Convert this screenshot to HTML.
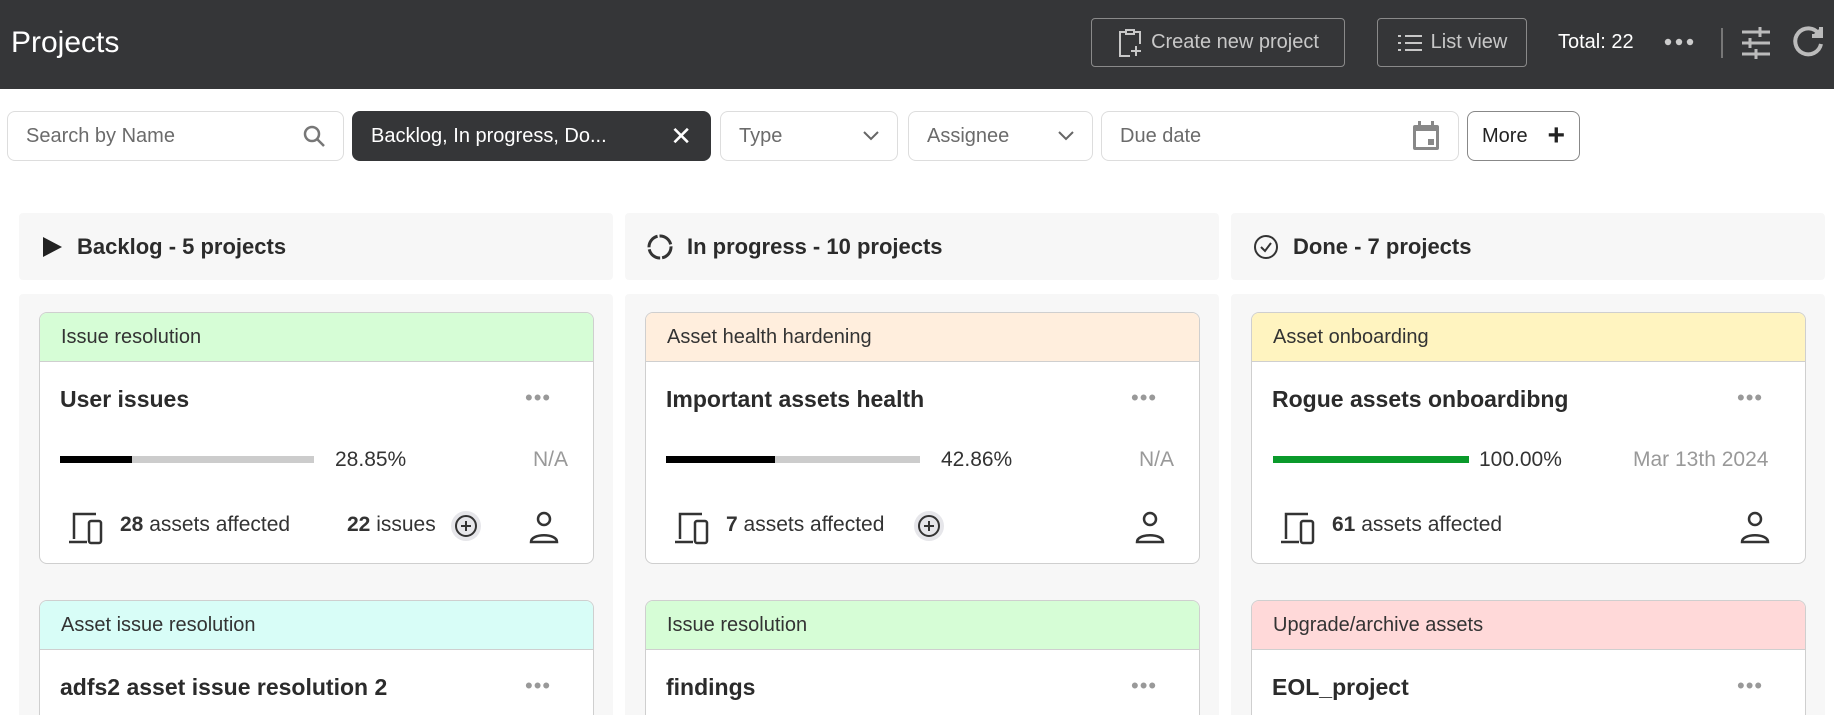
<!DOCTYPE html>
<html><head><meta charset="utf-8"><style>
*{box-sizing:border-box;margin:0;padding:0}
html,body{width:1834px;height:715px;overflow:hidden}
body{background:#fff;font-family:"Liberation Sans",sans-serif;color:#2b2b2b}
#w{position:relative;width:1834px;height:715px;overflow:hidden}
.a{position:absolute}
.hdr{left:0;top:0;width:1834px;height:89px;background:#353638}
.hbtn{border:1px solid #8a8a8a;border-radius:4px;color:#c8c8c8;font-size:20px;display:flex;align-items:center;justify-content:center;gap:8px;height:49px;top:18px}
.fl{top:111px;height:50px;border:1px solid #ddd;border-radius:8px;font-size:20px;color:#6b6b6b;display:flex;align-items:center;padding:0 18px;justify-content:space-between}
.colh{top:213px;height:67px;background:#f7f7f7;border-radius:4px;font-size:22px;font-weight:bold;display:flex;align-items:center;padding-left:22px;gap:14px}
.colb{top:294px;height:430px;background:#f7f7f7;border-radius:4px}
.card{width:555px;border:1px solid #cfcfcf;border-radius:8px;background:#fff;overflow:hidden}
.tag{height:49px;border-bottom:1px solid #cfcfcf;font-size:20px;padding-left:21px;display:flex;align-items:center;color:#333}
.t{font-size:23px;font-weight:bold;color:#2b2b2b}
.dots{color:#999;font-size:22px;letter-spacing:1px}
.txt{font-size:21px;color:#333}
.gray{color:#999}
</style></head><body><div id="w">
<div class="a hdr"></div>
<div class="a" style="left:11px;top:26px;font-size:30px;color:#fff">Projects</div>
<div class="a hbtn" style="left:1091px;width:254px"><svg width="26" height="30" viewBox="0 0 26 30" fill="none" stroke="#c8c8c8" stroke-width="2"><path d="M9 4H3v24h10M17 4h6v12"/><rect x="9" y="2" width="8" height="4"/><path d="M19 18v10M14 23h10"/></svg>Create new project</div>
<div class="a hbtn" style="left:1377px;width:150px"><svg width="26" height="20" viewBox="0 0 26 20" stroke="#c8c8c8" stroke-width="2"><path d="M1 3h3M8 3h17M1 10h3M8 10h17M1 17h3M8 17h17"/></svg>List view</div>
<div class="a" style="left:1558px;top:31px;color:#fff;font-size:20px">Total: 22</div>
<svg class="a" style="left:1663px;top:38px" width="32" height="8" viewBox="0 0 32 8" fill="#ccc"><circle cx="5" cy="4" r="3.2"/><circle cx="16" cy="4" r="3.2"/><circle cx="27" cy="4" r="3.2"/></svg>
<div class="a" style="left:1721px;top:28px;width:2px;height:30px;background:#777"></div>
<svg class="a" style="left:1740px;top:26px" width="32" height="34" viewBox="0 0 32 34" stroke="#bbb" stroke-width="3"><path d="M2 6h28M2 17h28M2 28h28M20 1v10M10 12v10M16 23v10"/></svg>
<svg class="a" style="left:1790px;top:24px" width="36" height="36" viewBox="0 0 36 36" fill="none" stroke="#bbb" stroke-width="4"><path d="M29 10A13 13 0 1 0 31 20"/><path d="M31 3v9h-9" fill="#bbb"/></svg>

<div class="a fl" style="left:7px;width:337px"><span>Search by Name</span><svg width="22" height="22" viewBox="0 0 22 22" fill="none" stroke="#777" stroke-width="2.5"><circle cx="9" cy="9" r="7"/><path d="M14 14l7 7"/></svg></div>
<div class="a fl" style="left:352px;width:359px;background:#353638;border-color:#353638;color:#fff"><span>Backlog, In progress, Do...</span><span style="font-size:26px">✕</span></div>
<div class="a fl" style="left:720px;width:178px"><span>Type</span><svg width="16" height="10" viewBox="0 0 16 10" fill="none" stroke="#666" stroke-width="2"><path d="M1 1l7 7 7-7"/></svg></div>
<div class="a fl" style="left:908px;width:185px"><span>Assignee</span><svg width="16" height="10" viewBox="0 0 16 10" fill="none" stroke="#666" stroke-width="2"><path d="M1 1l7 7 7-7"/></svg></div>
<div class="a fl" style="left:1101px;width:358px"><span>Due date</span><svg width="28" height="30" viewBox="0 0 28 30"><rect x="1" y="4" width="26" height="25" rx="2" fill="#888"/><rect x="4" y="10" width="20" height="16" fill="#fff"/><rect x="16" y="18" width="6" height="6" fill="#888"/><rect x="6" y="0" width="3" height="6" fill="#888"/><rect x="19" y="0" width="3" height="6" fill="#888"/></svg></div>
<div class="a fl" style="left:1467px;width:113px;border-color:#888;color:#222;padding:0 14px">More<span style="font-size:30px;font-weight:bold">+</span></div>

<div class="a colh" style="left:19px;width:594px"><svg width="22" height="22" viewBox="0 0 22 22"><path d="M2 1l19 10L2 21z" fill="#222"/></svg>Backlog - 5 projects</div>
<div class="a colh" style="left:625px;width:594px"><svg width="26" height="26" viewBox="0 0 26 26" fill="none" stroke="#333" stroke-width="3"><circle cx="13" cy="13" r="11" stroke-dasharray="15 2"/></svg>In progress - 10 projects</div>
<div class="a colh" style="left:1231px;width:594px"><svg width="26" height="26" viewBox="0 0 26 26" fill="none" stroke="#333" stroke-width="2"><circle cx="13" cy="13" r="11"/><path d="M8 13l4 4 6-8"/></svg>Done - 7 projects</div>
<div class="a colb" style="left:19px;width:594px"></div>
<div class="a colb" style="left:625px;width:594px"></div>
<div class="a colb" style="left:1231px;width:594px"></div>

<div class="a card" style="left:39px;top:312px;height:252px"><div class="tag" style="background:#d6fdd6">Issue resolution</div></div>
<div class="a card" style="left:645px;top:312px;height:252px"><div class="tag" style="background:#ffeedd">Asset health hardening</div></div>
<div class="a card" style="left:1251px;top:312px;height:252px"><div class="tag" style="background:#fff4c0">Asset onboarding</div></div>
<div class="a card" style="left:39px;top:600px;height:140px"><div class="tag" style="background:#d8fdf7">Asset issue resolution</div></div>
<div class="a card" style="left:645px;top:600px;height:140px"><div class="tag" style="background:#d6fdd6">Issue resolution</div></div>
<div class="a card" style="left:1251px;top:600px;height:140px"><div class="tag" style="background:#ffd9d9">Upgrade/archive assets</div></div>

<div class="a t" style="left:60px;top:386px">User issues</div>
<div class="a t" style="left:666px;top:386px">Important assets health</div>
<div class="a t" style="left:1272px;top:386px">Rogue assets onboardibng</div>
<div class="a t" style="left:60px;top:674px">adfs2 asset issue resolution 2</div>
<div class="a t" style="left:666px;top:674px">findings</div>
<div class="a t" style="left:1272px;top:674px">EOL_project</div>
<div class="a dots" style="left:525px;top:385px">•••</div>
<div class="a dots" style="left:1131px;top:385px">•••</div>
<div class="a dots" style="left:1737px;top:385px">•••</div>
<div class="a dots" style="left:525px;top:673px">•••</div>
<div class="a dots" style="left:1131px;top:673px">•••</div>
<div class="a dots" style="left:1737px;top:673px">•••</div>

<div class="a" style="left:60px;top:456px;width:254px;height:7px;background:#ccc"><div style="width:72px;height:7px;background:#000"></div></div>
<div class="a txt" style="left:335px;top:448px">28.85%</div>
<div class="a txt gray" style="left:533px;top:448px">N/A</div>
<div class="a" style="left:666px;top:456px;width:254px;height:7px;background:#ccc"><div style="width:109px;height:7px;background:#000"></div></div>
<div class="a txt" style="left:941px;top:448px">42.86%</div>
<div class="a txt gray" style="left:1139px;top:448px">N/A</div>
<div class="a" style="left:1273px;top:456px;width:196px;height:7px;background:#0a9a2b"></div>
<div class="a txt" style="left:1479px;top:448px">100.00%</div>
<div class="a txt gray" style="left:1633px;top:448px">Mar 13th 2024</div>

<svg class="a" style="left:68px;top:511px" width="40" height="34" viewBox="0 0 40 34" fill="none" stroke="#333" stroke-width="2.5"><path d="M6 28V3h22M1 31h18"/><rect x="21" y="10" width="12" height="22" rx="2"/></svg>
<div class="a txt" style="left:120px;top:513px"><b>28</b> assets affected</div>
<div class="a txt" style="left:347px;top:513px"><b>22</b> issues</div>
<svg class="a" style="left:451px;top:511px" width="30" height="30" viewBox="0 0 30 30"><circle cx="15" cy="15" r="15" fill="#e6e6ea"/><circle cx="15" cy="15" r="10" fill="none" stroke="#333" stroke-width="2"/><path d="M15 10v10M10 15h10" stroke="#333" stroke-width="2"/></svg>
<svg class="a" style="left:528px;top:511px" width="32" height="34" viewBox="0 0 32 34" fill="none" stroke="#333" stroke-width="2.5"><circle cx="16" cy="8" r="6"/><path d="M3 31c0-9 26-9 26 0z"/></svg>

<svg class="a" style="left:674px;top:511px" width="40" height="34" viewBox="0 0 40 34" fill="none" stroke="#333" stroke-width="2.5"><path d="M6 28V3h22M1 31h18"/><rect x="21" y="10" width="12" height="22" rx="2"/></svg>
<div class="a txt" style="left:726px;top:513px"><b>7</b> assets affected</div>
<svg class="a" style="left:914px;top:511px" width="30" height="30" viewBox="0 0 30 30"><circle cx="15" cy="15" r="15" fill="#e6e6ea"/><circle cx="15" cy="15" r="10" fill="none" stroke="#333" stroke-width="2"/><path d="M15 10v10M10 15h10" stroke="#333" stroke-width="2"/></svg>
<svg class="a" style="left:1134px;top:511px" width="32" height="34" viewBox="0 0 32 34" fill="none" stroke="#333" stroke-width="2.5"><circle cx="16" cy="8" r="6"/><path d="M3 31c0-9 26-9 26 0z"/></svg>

<svg class="a" style="left:1280px;top:511px" width="40" height="34" viewBox="0 0 40 34" fill="none" stroke="#333" stroke-width="2.5"><path d="M6 28V3h22M1 31h18"/><rect x="21" y="10" width="12" height="22" rx="2"/></svg>
<div class="a txt" style="left:1332px;top:513px"><b>61</b> assets affected</div>
<svg class="a" style="left:1739px;top:511px" width="32" height="34" viewBox="0 0 32 34" fill="none" stroke="#333" stroke-width="2.5"><circle cx="16" cy="8" r="6"/><path d="M3 31c0-9 26-9 26 0z"/></svg>
</div></body></html>
